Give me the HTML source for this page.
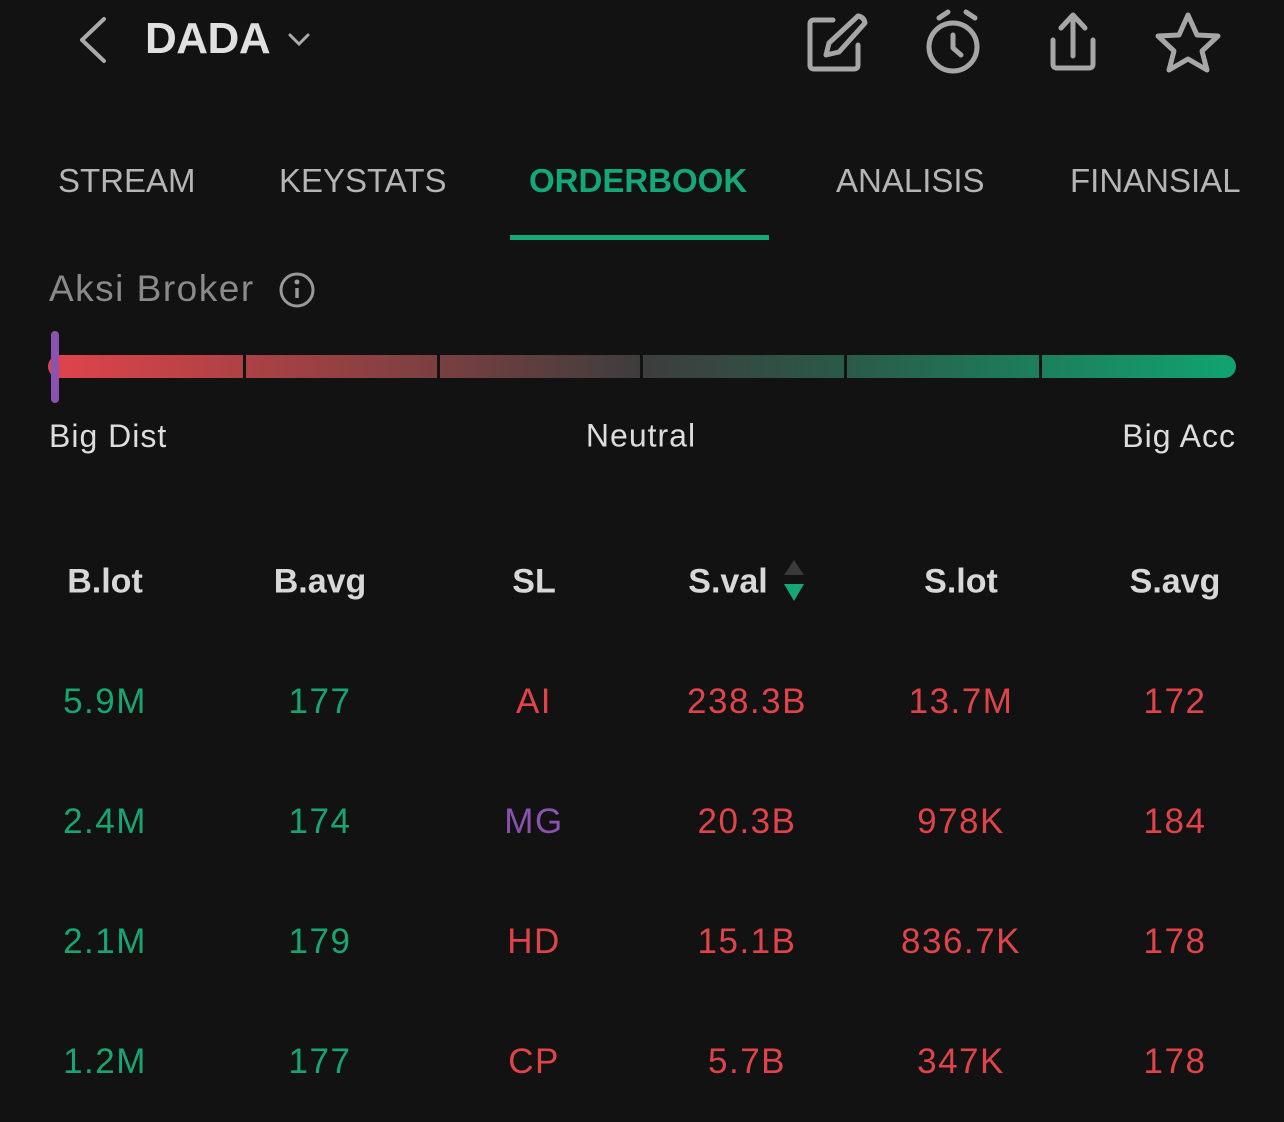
<!DOCTYPE html>
<html><head><style>
body{margin:0;width:1284px;height:1122px;background:#121212;font-family:"Liberation Sans",sans-serif;overflow:hidden;position:relative;color:#ddd}
.a{position:absolute;white-space:nowrap}
.c{position:absolute;transform:translate(-50%,-50%);white-space:nowrap}
.tab{font-size:33px;color:#b5b5b5;top:180px}
.h{font-size:34px;font-weight:bold;color:#d8d8d8;top:582px}
.r{font-size:35px;top:0;letter-spacing:1.5px}
.g{color:#17a673}.rd{color:#e0444a}.p{color:#8c52b0}
</style></head><body>
<svg class="a" style="left:70px;top:15px" width="50" height="50"><path d="M34 4 L12 25 L34 46" stroke="#aaa" stroke-width="4" fill="none" stroke-linecap="round" stroke-linejoin="round"/></svg>
<div class="a" style="left:145px;top:14px;font-size:44px;font-weight:bold;color:#e0e0e0;letter-spacing:-0.5px">DADA</div>
<svg class="a" style="left:286px;top:30px" width="26" height="20"><path d="M4 5 L13 14 L22 5" stroke="#aaa" stroke-width="3" fill="none" stroke-linecap="round"/></svg>
<svg class="a" style="left:800px;top:8px" width="480" height="70" fill="none" stroke="#a6a6a6" stroke-width="5" stroke-linecap="round" stroke-linejoin="round">
<path d="M33 12 H14 Q10 12 10 16 V57 Q10 61 14 61 H54 Q58 61 58 57 V37"/>
<path d="M58 8 Q64 9 65 15 L39 44 L26 47 L29 35 Z"/>
<circle cx="153" cy="39" r="24"/><path d="M153 27 V40 L161 47 M139 10 L148 4 M166 4 L175 10"/>
<path d="M273 8 V48 M261 20 L273 7 L285 20 M253 32 V56 Q253 60 257 60 H289 Q293 60 293 56 V32"/>
<path d="M388 7 L397 27 L418 28 L402 43 L407 62 L388 51 L369 62 L374 43 L358 28 L379 27 Z"/>
</svg>
<div class="a tab" style="left:58px;top:162px">STREAM</div>
<div class="a tab" style="left:279px;top:162px">KEYSTATS</div>
<div class="a tab" style="left:529px;top:162px;color:#14a878;font-weight:bold">ORDERBOOK</div>
<div class="a tab" style="left:836px;top:162px">ANALISIS</div>
<div class="a tab" style="left:1070px;top:162px">FINANSIAL</div>
<div class="a" style="left:510px;top:235px;width:259px;height:5px;background:#14a878"></div>
<div class="a" style="left:49px;top:268px;font-size:37px;color:#8a8a8a;letter-spacing:1.5px">Aksi Broker</div>
<svg class="a" style="left:278px;top:271px" width="38" height="38"><circle cx="19" cy="19" r="16" stroke="#999" stroke-width="3" fill="none"/><circle cx="19" cy="11" r="2.5" fill="#999"/><path d="M19 17 V27" stroke="#999" stroke-width="3.5"/></svg>
<div class="a" style="left:48px;top:355px;width:1188px;height:23px;border-radius:12px;background:linear-gradient(90deg,#e0444a 0%,#7a3f40 33%,#3d3d3d 50%,#2a5a48 67%,#10a470 100%)"></div>
<div class="a" style="left:243px;top:352px;width:3px;height:29px;background:#121212"></div>
<div class="a" style="left:437px;top:352px;width:3px;height:29px;background:#121212"></div>
<div class="a" style="left:640px;top:352px;width:3px;height:29px;background:#121212"></div>
<div class="a" style="left:844px;top:352px;width:3px;height:29px;background:#121212"></div>
<div class="a" style="left:1039px;top:352px;width:3px;height:29px;background:#121212"></div>
<div class="a" style="left:51px;top:331px;width:8px;height:72px;border-radius:4px;background:#8c52b0"></div>
<div class="a" style="left:49px;top:418px;font-size:32px;color:#ddd;letter-spacing:1px">Big Dist</div>
<div class="c" style="left:641px;top:436px;font-size:32px;color:#ddd;letter-spacing:1px">Neutral</div>
<div class="a" style="right:48px;top:418px;font-size:32px;color:#ddd;letter-spacing:1px">Big Acc</div>
<div class="c h" style="left:105px">B.lot</div>
<div class="c h" style="left:320px">B.avg</div>
<div class="c h" style="left:534px">SL</div>
<div class="c h" style="left:728px">S.val</div>
<svg class="a" style="left:782px;top:558px" width="24" height="46"><path d="M2 17 L12 2 L22 17Z" fill="#3a3a3a"/><path d="M2 26 L12 43 L22 26Z" fill="#14a878"/></svg>
<div class="c h" style="left:961px">S.lot</div>
<div class="c h" style="left:1175px">S.avg</div>

<div class="c r g" style="left:105px;top:702px">5.9M</div><div class="c r g" style="left:320px;top:702px">177</div><div class="c r rd" style="left:534px;top:702px">AI</div><div class="c r rd" style="left:747px;top:702px">238.3B</div><div class="c r rd" style="left:961px;top:702px">13.7M</div><div class="c r rd" style="left:1175px;top:702px">172</div>
<div class="c r g" style="left:105px;top:822px">2.4M</div><div class="c r g" style="left:320px;top:822px">174</div><div class="c r p" style="left:534px;top:822px">MG</div><div class="c r rd" style="left:747px;top:822px">20.3B</div><div class="c r rd" style="left:961px;top:822px">978K</div><div class="c r rd" style="left:1175px;top:822px">184</div>
<div class="c r g" style="left:105px;top:942px">2.1M</div><div class="c r g" style="left:320px;top:942px">179</div><div class="c r rd" style="left:534px;top:942px">HD</div><div class="c r rd" style="left:747px;top:942px">15.1B</div><div class="c r rd" style="left:961px;top:942px">836.7K</div><div class="c r rd" style="left:1175px;top:942px">178</div>
<div class="c r g" style="left:105px;top:1062px">1.2M</div><div class="c r g" style="left:320px;top:1062px">177</div><div class="c r rd" style="left:534px;top:1062px">CP</div><div class="c r rd" style="left:747px;top:1062px">5.7B</div><div class="c r rd" style="left:961px;top:1062px">347K</div><div class="c r rd" style="left:1175px;top:1062px">178</div>
</body></html>
